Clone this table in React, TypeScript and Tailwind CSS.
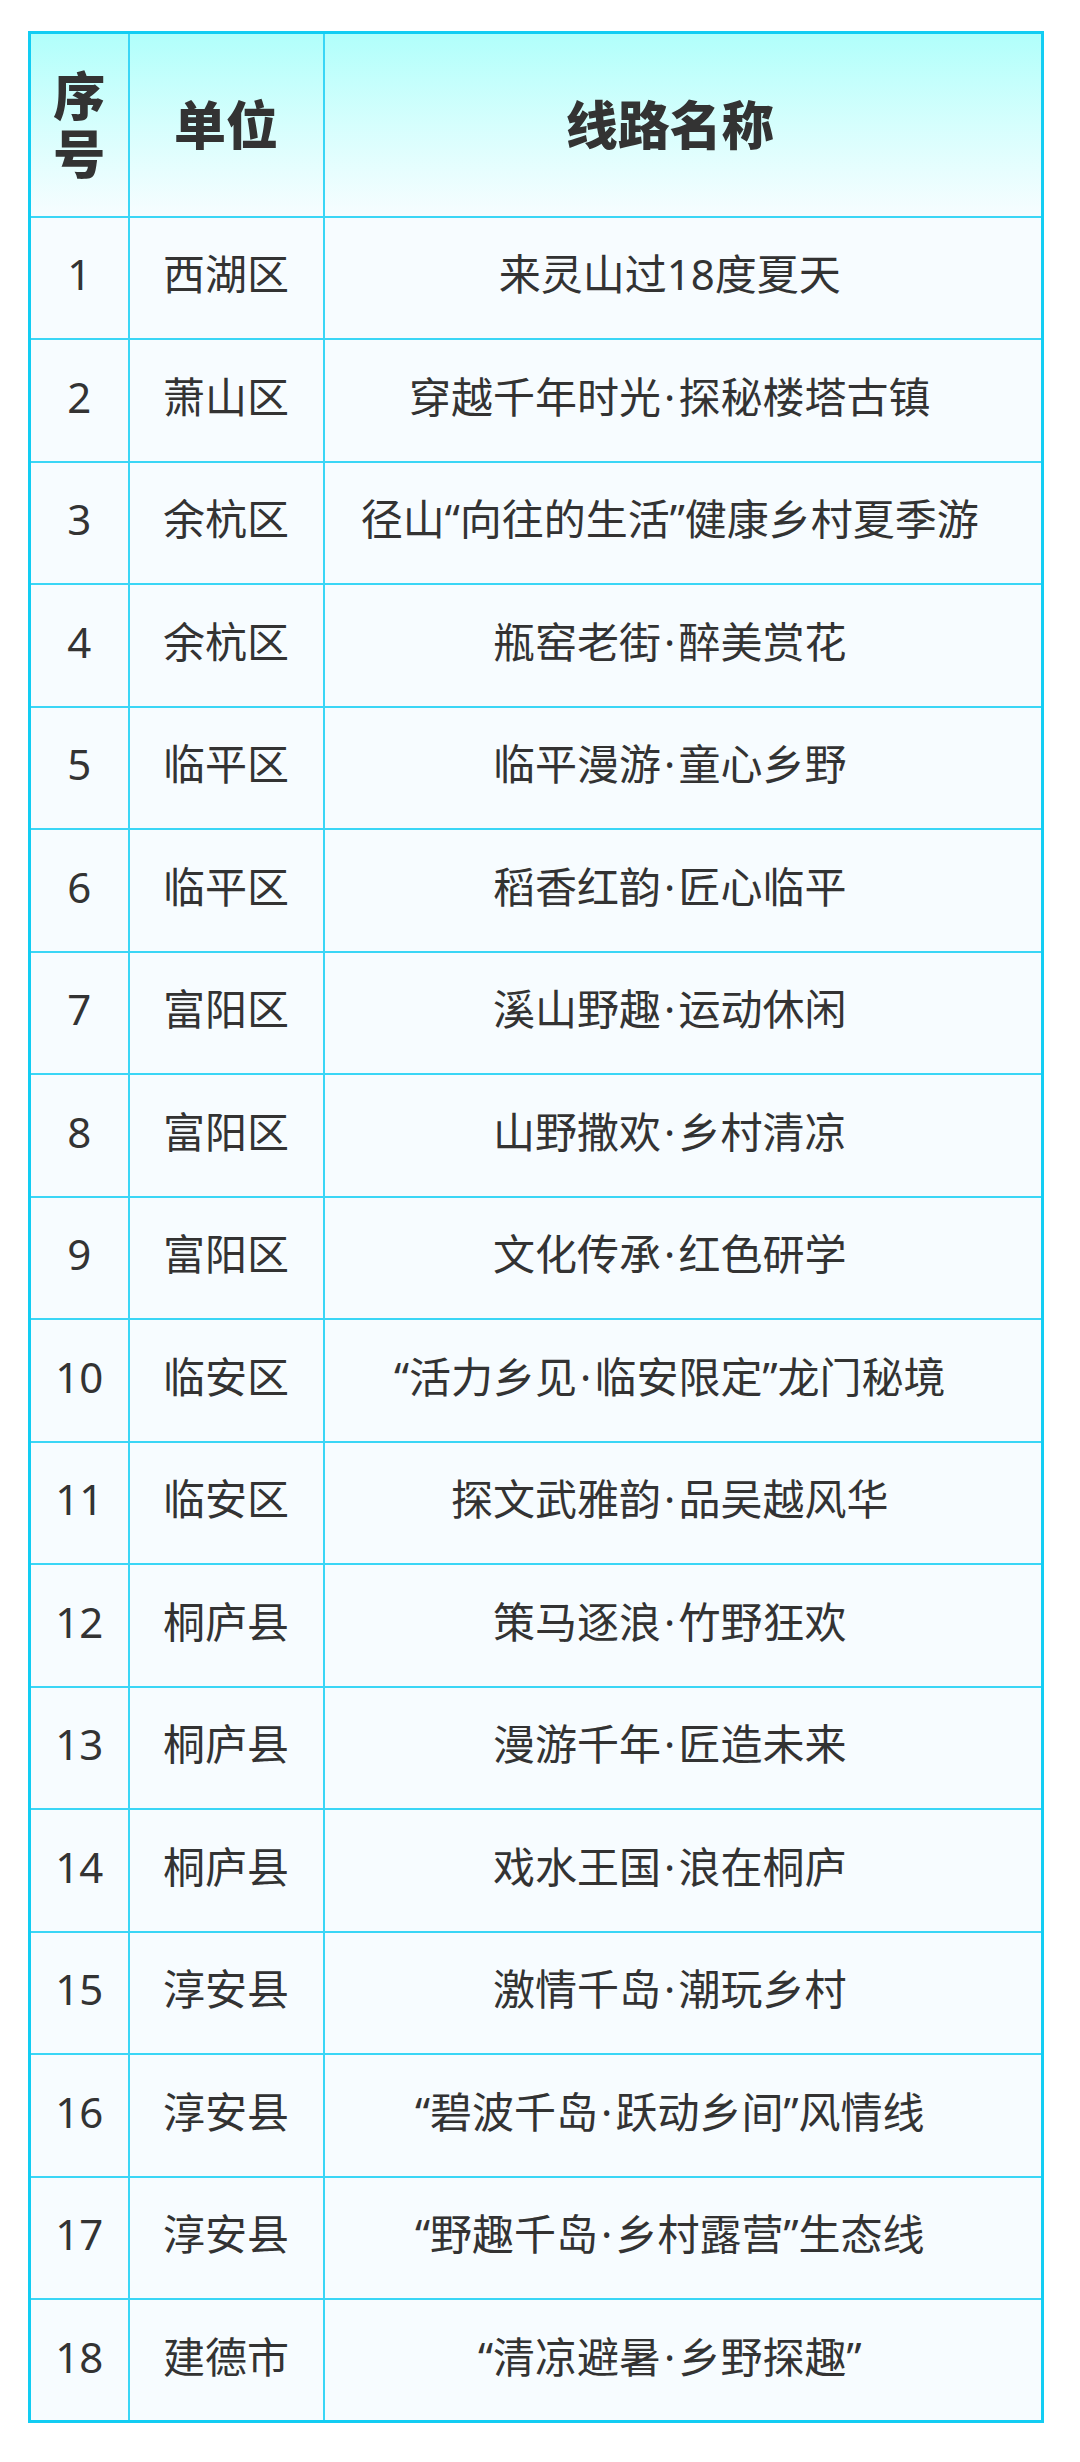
const rows: [string, string][] = [
  ["西湖区", "来灵山过18度夏天"],
  ["萧山区", "穿越千年时光·探秘楼塔古镇"],
  ["余杭区", "径山“向往的生活”健康乡村夏季游"],
  ["余杭区", "瓶窑老街·醉美赏花"],
  ["临平区", "临平漫游·童心乡野"],
  ["临平区", "稻香红韵·匠心临平"],
  ["富阳区", "溪山野趣·运动休闲"],
  ["富阳区", "山野撒欢·乡村清凉"],
  ["富阳区", "文化传承·红色研学"],
  ["临安区", "“活力乡见·临安限定”龙门秘境"],
  ["临安区", "探文武雅韵·品吴越风华"],
  ["桐庐县", "策马逐浪·竹野狂欢"],
  ["桐庐县", "漫游千年·匠造未来"],
  ["桐庐县", "戏水王国·浪在桐庐"],
  ["淳安县", "激情千岛·潮玩乡村"],
  ["淳安县", "“碧波千岛·跃动乡间”风情线"],
  ["淳安县", "“野趣千岛·乡村露营”生态线"],
  ["建德市", "“清凉避暑·乡野探趣”"],
];

// middle dot gets a little air on both sides
function RouteName({ text }: { text: string }) {
  const parts = text.split("·");
  return (
    <>
      {parts.map((p, i) => (
        <span key={i}>
          {i > 0 && <span className="mx-[3px]">·</span>}
          {p}
        </span>
      ))}
    </>
  );
}

export default function App() {
  return (
    <div
      className="w-[1080px] min-h-[2462px] bg-white pt-[31px] pl-[28px]"
      style={{ fontFamily: '"Noto Sans", "Noto Sans CJK SC", sans-serif' }}
    >
      <table className="w-[1016px] border-collapse border-[3px] border-[#12cdf3] text-[#333333] text-center table-fixed">
        <colgroup>
          <col className="w-[99px]" />
          <col className="w-[195px]" />
          <col />
        </colgroup>
        <thead>
          <tr className="h-[184px] bg-gradient-to-b from-[#b0fffb] to-[#f7fdff]">
            <th className="border-2 border-[#3ad6f6] text-[52px] font-black leading-[1.12] px-5">序号</th>
            <th className="border-2 border-[#3ad6f6] text-[52px] font-black">单位</th>
            <th className="border-2 border-[#3ad6f6] text-[52px] font-black pr-[26px]">线路名称</th>
          </tr>
        </thead>
        <tbody>
          {rows.map(([unit, name], i) => (
            <tr key={i} className="h-[122.5px] bg-[#f7fcff] text-[42px]">
              <td className="border-2 border-[#3ad6f6] pb-[8px]">{i + 1}</td>
              <td className="border-2 border-[#3ad6f6] pb-[8px]">{unit}</td>
              <td className="border-2 border-[#3ad6f6] pr-[26px] pb-[8px]">
                <RouteName text={name} />
              </td>
            </tr>
          ))}
        </tbody>
      </table>
    </div>
  );
}
